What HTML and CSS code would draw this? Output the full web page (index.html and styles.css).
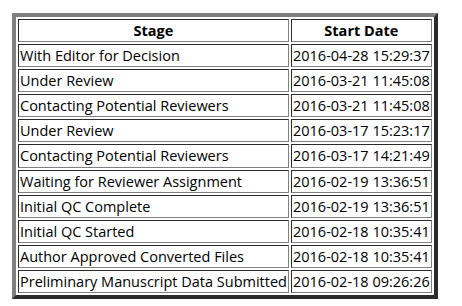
FILE: index.html
```html
<!DOCTYPE html>
<html>
<head>
<meta charset="utf-8">
<link rel="stylesheet" href="styles.css">
</head>
<body>
<table class="history">
  <thead>
    <tr><th>Stage</th><th>Start Date</th></tr>
  </thead>
  <tbody>
    <tr><td>With Editor for Decision</td><td>2016-04-28 15:29:37</td></tr>
    <tr><td>Under Review</td><td>2016-03-21 11:45:08</td></tr>
    <tr><td>Contacting Potential Reviewers</td><td>2016-03-21 11:45:08</td></tr>
    <tr><td>Under Review</td><td>2016-03-17 15:23:17</td></tr>
    <tr><td>Contacting Potential Reviewers</td><td>2016-03-17 14:21:49</td></tr>
    <tr><td>Waiting for Reviewer Assignment</td><td>2016-02-19 13:36:51</td></tr>
    <tr><td>Initial QC Complete</td><td>2016-02-19 13:36:51</td></tr>
    <tr><td>Initial QC Started</td><td>2016-02-18 10:35:41</td></tr>
    <tr><td>Author Approved Converted Files</td><td>2016-02-18 10:35:41</td></tr>
    <tr><td>Preliminary Manuscript Data Submitted</td><td>2016-02-18 09:26:26</td></tr>
  </tbody>
</table>
</body>
</html>
```

FILE: styles.css
```css
html, body {
  margin: 0;
  background: #fff;
}
body {
  padding: 13px 12px 12px;
  font-family: "Open Sans", sans-serif;
  font-size: 14.5px;
  color: #000;
}
.history {
  border-collapse: separate;
  border-spacing: 2px;
  border-width: 4px;
  border-style: solid;
  border-color: #808080 #2b2b2b #2b2b2b #808080;
}
.history th,
.history td {
  padding: 1px;
  line-height: 19.1px;
  border: 1px solid;
  border-color: #2b2b2b #808080 #808080 #2b2b2b;
  white-space: nowrap;
}
.history th {
  font-weight: bold;
  text-align: center;
}
.history td {
  text-align: left;
}
```
